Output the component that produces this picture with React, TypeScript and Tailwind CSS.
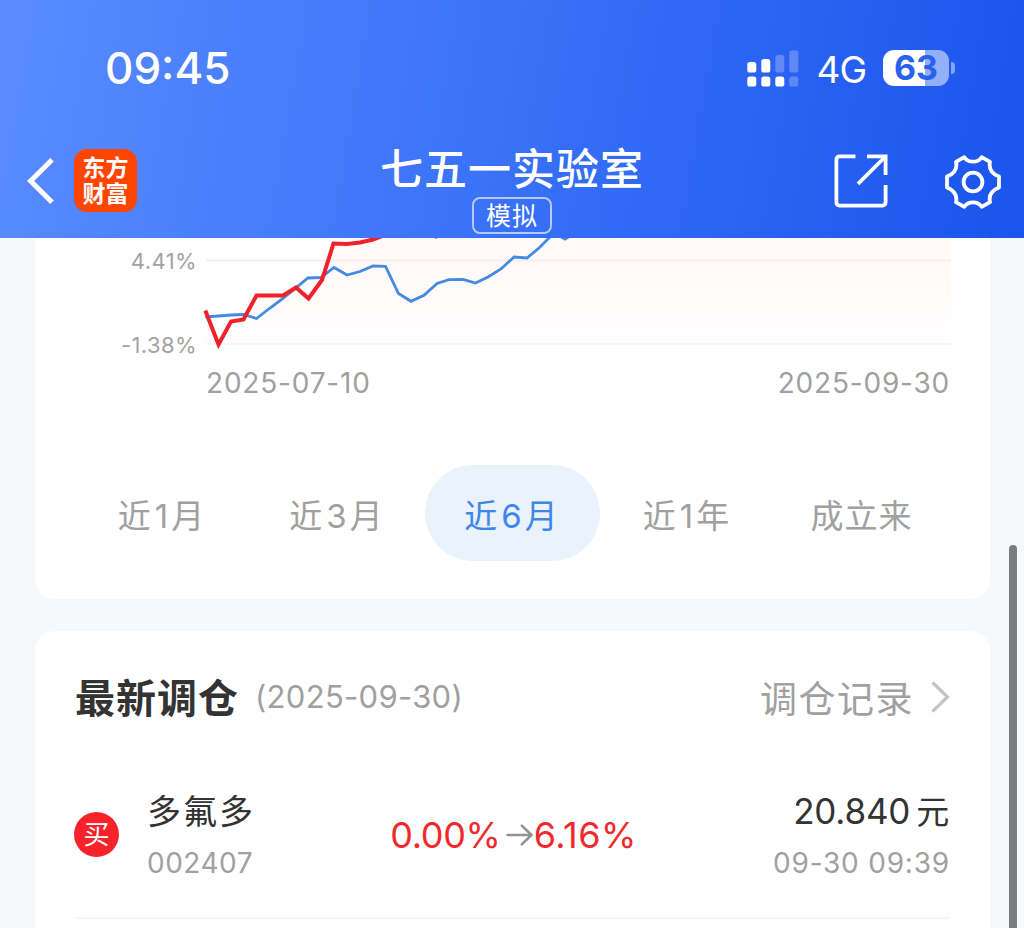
import * as React from "react";

interface IconProps {
  className?: string;
}

interface Range {
  before: string;
  count?: string;
  after?: string;
}

interface Trade {
  name: string;
  code: string;
  from: string;
  to: string;
  price: string;
  time: string;
}

const ranges: Range[] = [
  { before: "近", count: "1", after: "月" },
  { before: "近", count: "3", after: "月" },
  { before: "近", count: "6", after: "月" },
  { before: "近", count: "1", after: "年" },
  { before: "成立来" },
];

const trades: Trade[] = [
  {
    name: "多氟多",
    code: "002407",
    from: "0.00%",
    to: "6.16%",
    price: "20.840",
    time: "09-30 09:39",
  },
];

const portfolioLine =
  "205.3,310.5 218.5,344.5 231,321.5 243.5,319.5 256.5,295.5 283,295.5 296,287.5 308.5,298.5 322,280 333.5,243.5 347,244 360,242.5 373,239.5 385,235 430,234 436,236.6 442,234";

const indexLine =
  "205.5,317 231,315 243.5,314.5 256.5,318.5 270,308 283,298.5 308,278 321,277.5 334,267.5 347,275 360,271.5 373,266 385.5,266.3 398.5,293.5 411,301.3 424,295.3 437,283.5 449,279.7 463,279.3 475.5,283 488,277 501,269 514,257 527,258 539,248 552,235 558,235 565,239.2 570,236";

const SignalIcon: React.FC<IconProps> = ({ className }) => (
  <svg className={className} viewBox="0 0 52 37" fill="#fff">
    <rect x="0.3" y="12" width="9" height="10.5" rx="2.6" />
    <rect x="14.3" y="9" width="9" height="13.5" rx="2.6" />
    <rect x="28.3" y="5" width="9" height="17.5" rx="2.6" opacity="0.25" />
    <rect x="42.3" y="0.5" width="9" height="22" rx="2.6" opacity="0.25" />
    <rect x="0.3" y="26.5" width="9" height="10" rx="2.6" />
    <rect x="14.3" y="26.5" width="9" height="10" rx="2.6" />
    <rect x="28.3" y="26.5" width="9" height="10" rx="2.6" />
    <rect x="42.3" y="26.5" width="9" height="10" rx="2.6" opacity="0.25" />
  </svg>
);

const BackIcon: React.FC<IconProps> = ({ className }) => (
  <svg className={className} viewBox="0 0 27 46" fill="none" stroke="#fff" strokeWidth="5">
    <path d="M25 1.8 3.6 23 25 44.2" />
  </svg>
);

const ShareIcon: React.FC<IconProps> = ({ className }) => (
  <svg className={className} viewBox="0 0 54 54" fill="none" stroke="#fff" strokeWidth="3.8">
    <path d="M21.5 2.4H5.4a3 3 0 0 0-3 3v43.2a3 3 0 0 0 3 3h43.2a3 3 0 0 0 3-3V31" />
    <path d="M33 2.4h18.6V21" />
    <path d="M51 3 24 29.8" />
  </svg>
);

const GearIcon: React.FC<IconProps> = ({ className }) => (
  <svg
    className={className}
    viewBox="0 0 56 54"
    fill="none"
    stroke="#fff"
    strokeWidth="3.8"
    strokeLinejoin="round"
  >
    <path d="M19.3 2.2C21.5 5.6 24.6 6.7 28 6.7S34.5 5.6 36.7 2.2L45 6.9C43.6 13.2 46.6 18.6 54 21.6V32.4C46.6 35.4 43.6 40.8 45 47.1L36.7 51.8C34.5 48.4 31.4 47.3 28 47.3S21.5 48.4 19.3 51.8L11 47.1C12.4 40.8 9.4 35.4 2 32.4V21.6C9.4 18.6 12.4 13.2 11 6.9Z" />
    <circle cx="28" cy="27" r="9.4" />
  </svg>
);

const ArrowIcon: React.FC<IconProps> = ({ className }) => (
  <svg
    className={className}
    viewBox="0 0 27 22"
    fill="none"
    stroke="#8f9193"
    strokeWidth="2.5"
    strokeLinecap="round"
    strokeLinejoin="round"
  >
    <path d="M1.5 11H25.5M15.8 1.6 25.5 11 15.8 20.4" />
  </svg>
);

const ChevronIcon: React.FC<IconProps> = ({ className }) => (
  <svg className={className} viewBox="0 0 19 32" fill="none" stroke="#c4c4c4" strokeWidth="3.2">
    <path d="M1.5 1.5 16.5 16 1.5 30.5" />
  </svg>
);

const Header: React.FC = () => {
  return (
    <header className="h-[238px] shrink-0 bg-[linear-gradient(100deg,#5a8cff_0%,#3a72f8_48%,#1a54ec_100%)] text-white">
      {/**
       * Status Bar
       */}
      <div className="flex h-[136px] justify-between pl-[105px] pr-[69px]">
        <p className="mt-[46px] text-[44px] leading-[44px] font-medium tracking-[0px]">09:45</p>
        <div className="mt-[49px] flex h-[38px] items-center">
          <SignalIcon className="h-[37px] w-[52px]" />
          <p className="ml-[17px] mt-[3px] text-[37px] leading-[38px] tracking-[-1px]">4G</p>
          <div className="ml-[17px] flex h-[36px] w-[66px] items-center justify-center rounded-[11px] bg-[linear-gradient(90deg,#fff_63%,#94affa_63%)]">
            <span className="text-[34px] leading-[36px] font-bold text-[#2a62f0]">63</span>
          </div>
          <div className="ml-[2px] h-[12px] w-[4px] rounded-r-full bg-[#86a5f8]" />
        </div>
      </div>
      {/**
       * Nav Bar
       */}
      <div className="grid h-[102px] grid-cols-[1fr_auto_1fr] pl-[25px] pr-[25px]">
        <div className="mt-[13px] flex h-[63px] items-center pl-[2px]">
          <BackIcon className="h-[46px] w-[27px]" />
          <p className="ml-[20px] h-[63px] w-[63px] rounded-[13px] bg-[#ff4500] pt-[4px] text-center font-['Noto_Sans_CJK_SC'] text-[23px] leading-[26px] font-bold">
            东方
            <br />
            财富
          </p>
        </div>
        <div className="flex flex-col items-center">
          <h1 className="mt-[8px] text-[43px] leading-[50px] font-medium tracking-[1px]">
            七五一实验室
          </h1>
          <span className="mt-[3px] flex h-[37px] w-[80px] items-center justify-center rounded-[8px] border-2 border-[#b4cafd] text-[25px] leading-[30px] tracking-[1px]">
            模拟
          </span>
        </div>
        <div className="mr-[-2px] mt-[18px] flex h-[56px] items-center justify-end gap-[57px]">
          <ShareIcon className="mb-[2px] h-[54px] w-[54px]" />
          <GearIcon className="h-[54px] w-[56px]" />
        </div>
      </div>
    </header>
  );
};

const Chart: React.FC = () => {
  return (
    <div className="flex h-[112px]">
      <div className="flex w-[165px] flex-col gap-[60px] pt-[11px] pr-[3px] text-right text-[22px] leading-[24px] tracking-[0.4px] text-[#a3a3a3]">
        <span>4.41%</span>
        <span>-1.38%</span>
      </div>
      <svg className="h-[112px] w-[752px]" viewBox="200 238 752 112" fill="none">
        <defs>
          <linearGradient id="area" x1="0" y1="238" x2="0" y2="344" gradientUnits="userSpaceOnUse">
            <stop offset="0" stopColor="#fff9f7" />
            <stop offset="1" stopColor="#fffdfe" />
          </linearGradient>
        </defs>
        <polygon points={`${portfolioLine} 951,234 951,344 206,344`} fill="url(#area)" />
        <path d="M206 260.5H951" stroke="#f4f0f0" strokeWidth="2" />
        <path d="M206 344H951" stroke="#f7f6f6" strokeWidth="2" />
        <polyline points={indexLine} stroke="#4489e2" strokeWidth="2.8" />
        <polyline points={portfolioLine} stroke="#f0212a" strokeWidth="4" />
      </svg>
    </div>
  );
};

const App: React.FC = () => {
  const [active, setActive] = React.useState(2);

  return (
    <div className="relative flex h-[928px] w-[1024px] flex-col overflow-hidden bg-[#f6f8fb] font-[Inter,'Noto_Sans_CJK_SC',sans-serif]">
      <Header />
      <main className="flex flex-1 flex-col gap-8 pl-[35px] pr-[34px]">
        <section className="h-[361px] shrink-0 rounded-b-[20px] bg-white">
          <Chart />
          <div className="flex h-[115px] justify-between pt-[18px] pl-[171px] pr-[40px] text-[28px] leading-[30px] tracking-[0.8px] text-[#a0a0a0]">
            <span>2025-07-10</span>
            <span>2025-09-30</span>
          </div>
          <div className="flex pl-[40px]">
            {ranges.map((range, index) => (
              <button
                key={index}
                onClick={() => setActive(index)}
                className={`h-[96px] w-[175px] rounded-full pt-[8px] pr-[2px] text-[33px] tracking-[1px] ${
                  index === active ? "bg-[#eaf2fc] text-[#3f86e8]" : "text-[#a0a0a0]"
                }`}
              >
                {range.before}
                {range.count && <span className="ml-[3px] mr-[2px]">{range.count}</span>}
                {range.after}
              </button>
            ))}
          </div>
        </section>

        <section className="h-[340px] shrink-0 rounded-t-[20px] bg-white px-[40px]">
          <div className="flex h-[132px] items-center justify-between">
            <div className="flex items-center">
              <h2 className="pt-[3px] text-[40px] leading-[48px] font-bold tracking-[1px] text-[#333]">
                最新调仓
              </h2>
              <span className="ml-[16px] text-[31px] leading-[36px] tracking-[0.3px] text-[#a0a0a0]">
                (2025-09-30)
              </span>
            </div>
            <div className="flex items-center text-[#a0a0a0]">
              <span className="pt-[5px] text-[37px] leading-[44px] tracking-[1.5px]">调仓记录</span>
              <ChevronIcon className="ml-[17px] h-[32px] w-[19px]" />
            </div>
          </div>
          {trades.map((trade) => (
            <div
              key={trade.code}
              className="grid h-[156px] grid-cols-[1fr_auto_1fr] items-center border-b-2 border-[#f6f6f6] pb-[11px]"
            >
              <div className="flex items-center">
                <span className="ml-[-1px] flex h-[45px] w-[45px] items-center justify-center rounded-full bg-[#f8222a] text-[26px] leading-[30px] text-white">
                  买
                </span>
                <div className="ml-[28px] flex flex-col">
                  <span className="text-[34px] leading-[44px] tracking-[2px] text-[#333]">
                    {trade.name}
                  </span>
                  <span className="mt-[12px] text-[28px] leading-[34px] tracking-[0.5px] text-[#a0a0a0]">
                    {trade.code}
                  </span>
                </div>
              </div>
              <div className="flex items-center pl-[2px] text-[36px] leading-[44px] text-[#f1292d]">
                <span className="tracking-[-0.3px]">{trade.from}</span>
                <ArrowIcon className="ml-[5px] mr-[1px] h-[22px] w-[27px]" />
                <span className="tracking-[0.5px]">{trade.to}</span>
              </div>
              <div className="flex flex-col items-end">
                <span className="pr-[1px] text-[35px] leading-[44px] tracking-[-0.2px] text-[#333]">
                  {trade.price}
                  <span className="ml-[6px] text-[33px]">元</span>
                </span>
                <span className="mt-[12px] text-[28px] leading-[34px] tracking-[0.8px] text-[#a0a0a0]">
                  {trade.time}
                </span>
              </div>
            </div>
          ))}
        </section>
      </main>
      {/**
       * Scroll Thumb
       */}
      <div className="absolute top-[545px] right-[7px] h-[400px] w-[8px] rounded-full bg-[#7b7c7e]" />
    </div>
  );
};

export default App;
